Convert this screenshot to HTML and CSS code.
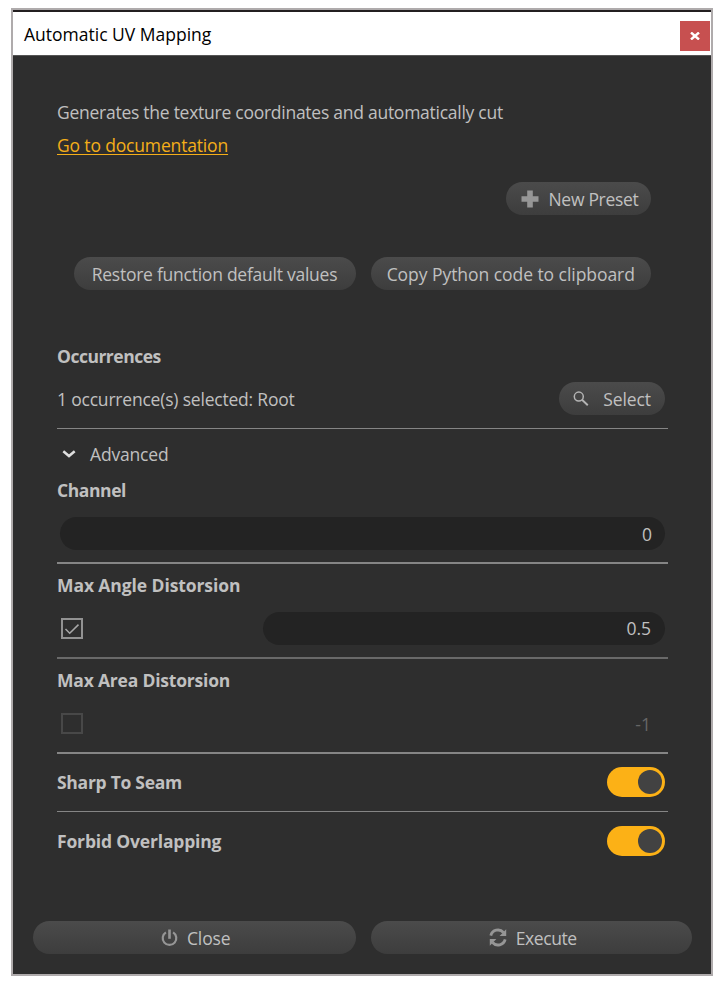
FILE: index.html
```
<!DOCTYPE html>
<html lang="en">
<head>
<meta charset="utf-8">
<title>Automatic UV Mapping</title>
<link rel="stylesheet" href="styles.css">
</head>
<body>
<main class="window">
  <header class="titlebar">
    <h1 class="title">Automatic UV Mapping</h1>
    <button class="close-x" aria-label="Close window">
      <svg width="10" height="8" viewBox="0 0 10 8"><path d="M1 0.5 L9 7.5 M9 0.5 L1 7.5" stroke="#fff" stroke-width="2.4"/></svg>
    </button>
  </header>

  <div class="content">
    <p class="text description">Generates the texture coordinates and automatically cut</p>
    <p class="text doc"><a class="link" href="#">Go to documentation</a></p>

    <div class="actions preset-row">
      <button class="btn with-icon preset">
        <svg width="18" height="18" viewBox="0 0 18 18"><path d="M6.2 0.5h5.6v5.7h5.7v5.6h-5.7v5.7h-5.6v-5.7h-5.7v-5.6h5.7z" fill="#969696"/></svg>
        <span class="t-preset">New Preset</span>
      </button>
    </div>
    <div class="actions tools-row">
      <button class="btn restore"><span class="t-restore">Restore function default values</span></button>
      <button class="btn copy"><span class="t-copy">Copy Python code to clipboard</span></button>
    </div>

    <section class="group occurrences">
      <h2 class="label t-occ">Occurrences</h2>
      <div class="row select-row">
        <span class="text t-selected">1 occurrence(s) selected: Root</span>
        <button class="btn select">
          <svg width="16" height="16" viewBox="0 0 16 16" fill="none" stroke="#b4b4b4"><circle cx="5.8" cy="5.6" r="4.5" stroke-width="1.5"/><path d="M9 8.8 L14.8 14.3" stroke-width="1.9"/></svg>
          <span class="t-select">Select</span>
        </button>
      </div>
    </section>

    <section class="group channel">
      <div class="advanced">
        <svg width="14" height="10" viewBox="0 0 14 10" fill="none"><path d="M1.3 2.2 L7 7 L12.7 2.2" stroke="#dedede" stroke-width="2.5"/></svg>
        <span class="text t-advanced">Advanced</span>
      </div>
      <h2 class="label t-channel">Channel</h2>
      <div class="row"><div class="field wide">0</div></div>
    </section>

    <section class="group angle">
      <h2 class="label t-angle">Max Angle Distorsion</h2>
      <div class="row">
        <span class="check on"><svg width="16" height="14" viewBox="0 0 16 14" fill="none"><path d="M1.5 7 L5.7 11.2 L14.5 2.6" stroke="#a8a8a8" stroke-width="1.5"/></svg></span>
        <div class="field">0.5</div>
      </div>
    </section>

    <section class="group area">
      <h2 class="label t-area">Max Area Distorsion</h2>
      <div class="row">
        <span class="check"></span>
        <div class="field disabled">-1</div>
      </div>
    </section>

    <section class="group switch-group sharp">
      <h2 class="label t-sharp">Sharp To Seam</h2>
      <span class="toggle"><span class="knob"></span></span>
    </section>
    <section class="group switch-group forbid">
      <h2 class="label t-forbid">Forbid Overlapping</h2>
      <span class="toggle"><span class="knob"></span></span>
    </section>
  </div>

  <footer class="footer">
    <button class="btn with-icon">
      <svg width="17" height="18" viewBox="0 0 17 18" fill="none" stroke="#969696"><path d="M4.9 3.4 A6.8 6.8 0 1 0 12.1 3.4" stroke-width="2.2"/><path d="M8.5 0.5 V9.8" stroke-width="2.6"/></svg>
      <span class="t-close">Close</span>
    </button>
    <button class="btn with-icon">
      <svg width="18" height="19" viewBox="0 0 18 19"><g fill="none" stroke="#969696" stroke-width="2.8"><path d="M1.8 7.6 A7.4 7.4 0 0 1 14.5 4.5"/><path d="M16.2 11.4 A7.4 7.4 0 0 1 3.5 14.5"/></g><path d="M17.2 1.2 V8 H10.6 Z M0.8 17.8 V11 H7.4 Z" fill="#969696"/></svg>
      <span class="t-execute">Execute</span>
    </button>
  </footer>
</main>
</body>
</html>
```

FILE: styles.css
```
* { box-sizing: border-box; }
body {
  margin: 0;
  padding: 8px 5px 5px 11px;
  background: #fff;
  font-family: "Open Sans", "Noto Sans", sans-serif;
  font-size: 17.5px;
  line-height: 26px;
  color: #c0c0c0;
}
h1, h2, p { margin: 0; font-size: inherit; }
svg { display: block; flex: none; }
button { border: 0; padding: 0; font: inherit; color: inherit; }

.window {
  display: flex;
  flex-direction: column;
  width: 702px;
  height: 968px;
  border: 2px solid #afabac;
  background: #2e2e2e;
}
.titlebar {
  display: flex;
  justify-content: space-between;
  flex: none;
  height: 46px;
  padding: 9px 1px 0 11px;
  border-top: 2px solid #231f20;
  border-bottom: 1px solid #555;
  background: #fff;
  color: #000;
}
.title { font-weight: 400; }
.close-x {
  display: grid;
  place-items: center;
  width: 30px;
  height: 30px;
  background: #c75050;
}
.content { flex: 1; padding: 43px 43px 0 44px; }
.text { display: block; white-space: nowrap; }
.description { height: 33px; letter-spacing: -0.26px; }
.doc { height: 50px; letter-spacing: -0.16px; }
.link {
  color: #f5ae19;
  text-decoration: underline;
  text-decoration-thickness: 1px;
  text-underline-offset: 2px;
}

.btn {
  display: flex;
  align-items: center;
  justify-content: center;
  gap: 9px;
  height: 33px;
  border-radius: 17px;
  background: linear-gradient(#4b4b4b, #3d3d3d);
  white-space: nowrap;
}
.with-icon { padding-left: 3px; }
.actions { display: flex; justify-content: flex-end; gap: 15px; padding-right: 17px; }
.preset-row { height: 75px; }
.tools-row { height: 86px; }
.preset { width: 145px; }
.restore { width: 282px; }
.copy { width: 280.5px; }
.select { width: 106px; gap: 14px; }

/* Tracking per string */
.t-preset { letter-spacing: -0.3px; }
.t-restore { letter-spacing: -0.25px; }
.t-copy { letter-spacing: -0.05px; }
.t-occ { letter-spacing: -0.5px; }
.t-selected { letter-spacing: -0.2px; }
.t-select { letter-spacing: -0.1px; }
.t-advanced { letter-spacing: -0.17px; }
.t-channel { letter-spacing: -0.42px; }
.t-angle { letter-spacing: -0.09px; }
.t-area { letter-spacing: -0.2px; }
.t-sharp { letter-spacing: -0.27px; }
.t-forbid { letter-spacing: -0.17px; }
.t-close { letter-spacing: -0.1px; }
.t-execute { letter-spacing: -0.4px; }

.group { border-bottom: 1px solid #858585; }
.label { font-weight: 700; white-space: nowrap; height: 26px; }
.row { display: flex; align-items: center; justify-content: space-between; height: 33px; padding: 0 3px 0 4px; }
.select-row { padding-left: 0; margin-top: 13px; }
.occurrences { height: 86px; }
.channel { height: 135px; border-bottom-width: 2px; }
.advanced { display: flex; align-items: center; gap: 14px; height: 48px; padding: 12px 0 10px 5px; }
.channel .row { margin-top: 14px; padding-left: 3px; }
.field {
  width: 402px;
  height: 33px;
  padding: 3px 14px 0 0;
  border-radius: 17px;
  background: #232323;
  text-align: right;
}
.field.wide { width: 605px; padding: 4px 13px 0 0; }
.field.disabled { padding-top: 4px; background: none; color: #666; }
.angle { height: 95px; padding-top: 8px; border-bottom: 2px solid #696969; }
.angle .row { margin-top: 14px; }
.area { height: 95px; padding-top: 8px; border-bottom-width: 2px; }
.area .row { margin-top: 14px; }
.check {
  display: grid;
  place-items: center;
  width: 22px;
  height: 21px;
  border: 2px solid #484848;
}
.check.on { border-color: #929292; }

.switch-group { display: flex; justify-content: space-between; padding-right: 3px; }
.sharp { height: 58px; padding-top: 13px; }
.sharp .label { margin-top: 2px; }
.forbid { padding-top: 14px; border: 0; }
.forbid .label { margin-top: 2px; }
.toggle {
  display: flex;
  align-items: center;
  justify-content: flex-end;
  width: 58px;
  height: 30px;
  padding-right: 3px;
  border-radius: 15px;
  background: #fcb116;
}
.knob { width: 24px; height: 24px; border-radius: 50%; background: #424242; }

.footer { display: grid; grid-template-columns: 322.5px 321.5px; gap: 15px; padding: 0 0 20px 20px; }
```
